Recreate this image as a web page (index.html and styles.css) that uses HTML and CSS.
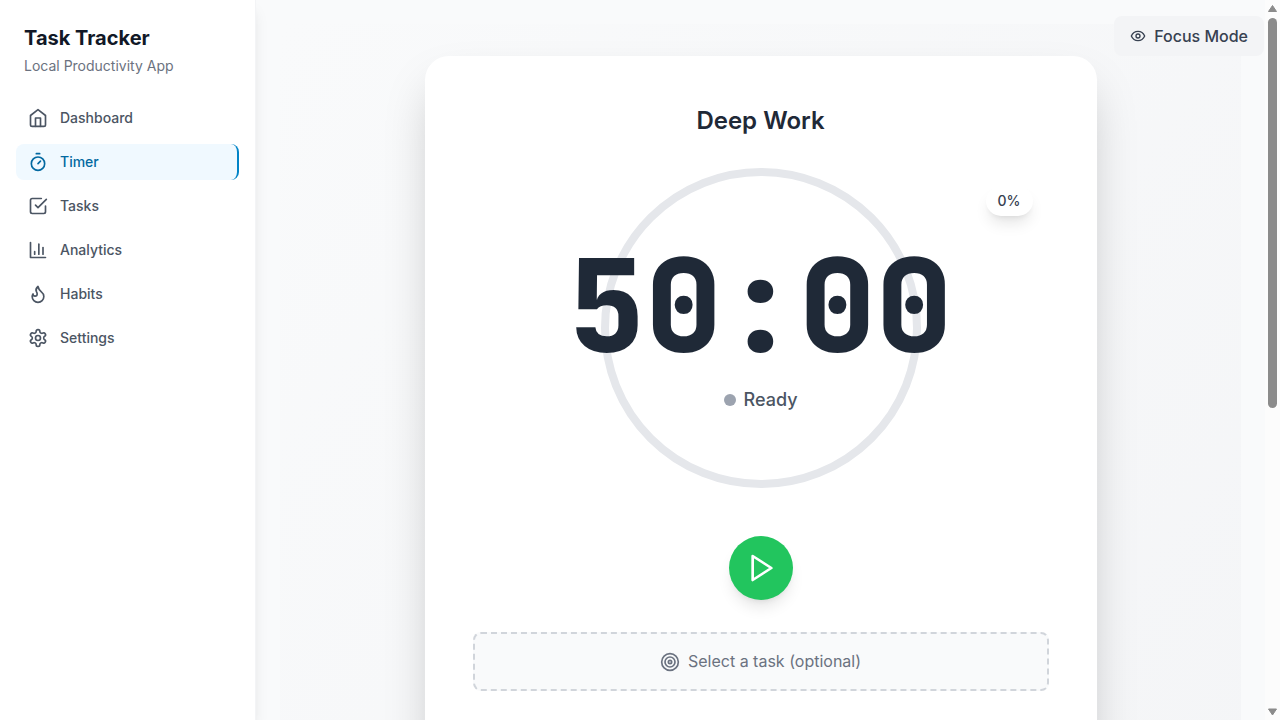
FILE: index.html
```html
<!DOCTYPE html>
<html lang="en">
<head>
<meta charset="utf-8">
<meta name="viewport" content="width=device-width, initial-scale=1">
<title>Task Tracker</title>
<link rel="stylesheet" href="styles.css">
</head>
<body>
<div class="app">
  <aside class="sidebar">
    <header class="brand">
      <h1 class="brand-title">Task Tracker</h1>
      <p class="brand-subtitle">Local Productivity App</p>
    </header>
    <nav class="nav">
      <a class="nav-link" href="#dashboard">
        <svg class="icon" viewBox="0 0 24 24"><path d="m3 9 9-7 9 7v11a2 2 0 0 1-2 2H5a2 2 0 0 1-2-2z"/><polyline points="9 22 9 12 15 12 15 22"/></svg>
        Dashboard
      </a>
      <a class="nav-link active" href="#timer" aria-current="page">
        <svg class="icon" viewBox="0 0 24 24"><line x1="10" x2="14" y1="2" y2="2"/><line x1="12" x2="15" y1="14" y2="11"/><circle cx="12" cy="14" r="8"/></svg>
        Timer
      </a>
      <a class="nav-link" href="#tasks">
        <svg class="icon" viewBox="0 0 24 24"><path d="m9 11 3 3L22 4"/><path d="M21 12v7a2 2 0 0 1-2 2H5a2 2 0 0 1-2-2V5a2 2 0 0 1 2-2h11"/></svg>
        Tasks
      </a>
      <a class="nav-link" href="#analytics">
        <svg class="icon" viewBox="0 0 24 24"><path d="M3 3v18h18"/><path d="M18 17V9"/><path d="M13 17V5"/><path d="M8 17v-3"/></svg>
        Analytics
      </a>
      <a class="nav-link" href="#habits">
        <svg class="icon" viewBox="0 0 24 24"><path d="M8.500 14.500A2.500 2.500 0 0 0 11 12c0-1.380-.5-2-1-3-1.072-2.143-.224-4.054 2-6 .5 2.500 2 4.900 4 6.500 2 1.600 3 3.500 3 5.500a7 7 0 1 1-14 0c0-1.153.433-2.294 1-3a2.500 2.500 0 0 0 2.500 2.500z"/></svg>
        Habits
      </a>
      <a class="nav-link" href="#settings">
        <svg class="icon" viewBox="0 0 24 24"><path d="M12.220 2h-.44a2 2 0 0 0-2 2v.18a2 2 0 0 1-1 1.730l-.43.25a2 2 0 0 1-2 0l-.15-.08a2 2 0 0 0-2.730.73l-.22.38a2 2 0 0 0 .73 2.730l.15.1a2 2 0 0 1 1 1.720v.51a2 2 0 0 1-1 1.740l-.15.09a2 2 0 0 0-.73 2.730l.22.38a2 2 0 0 0 2.730.73l.15-.08a2 2 0 0 1 2 0l.43.25a2 2 0 0 1 1 1.730V20a2 2 0 0 0 2 2h.44a2 2 0 0 0 2-2v-.18a2 2 0 0 1 1-1.730l.43-.25a2 2 0 0 1 2 0l.15.08a2 2 0 0 0 2.730-.73l.22-.39a2 2 0 0 0-.73-2.730l-.15-.08a2 2 0 0 1-1-1.740v-.5a2 2 0 0 1 1-1.740l.15-.09a2 2 0 0 0 .73-2.730l-.22-.38a2 2 0 0 0-2.730-.73l-.15.08a2 2 0 0 1-2 0l-.43-.25a2 2 0 0 1-1-1.730V4a2 2 0 0 0-2-2z"/><circle cx="12" cy="12" r="3"/></svg>
        Settings
      </a>
    </nav>
  </aside>

  <main class="main">
    <div class="stage">
      <section class="card">
        <h2 class="session">Deep Work</h2>
        <div class="dial-row">
          <div class="dial">
            <svg class="ring" viewBox="0 0 320 320"><circle cx="160" cy="160" r="156"/></svg>
            <div class="readout">
              <div class="time" role="timer">50:00</div>
              <div class="status"><span class="dot"></span>Ready</div>
            </div>
          </div>
          <span class="percent">0%</span>
        </div>
        <button class="play" type="button" aria-label="Start">
          <svg class="icon" viewBox="0 0 24 24"><polygon points="5 3 19 12 5 21 5 3"/></svg>
        </button>
        <button class="task-picker" type="button">
          <svg class="icon" viewBox="0 0 24 24"><circle cx="12" cy="12" r="10"/><circle cx="12" cy="12" r="6"/><circle cx="12" cy="12" r="2"/></svg>
          Select a task (optional)
        </button>
      </section>
    </div>
  </main>

  <div class="scrollbar" aria-hidden="true">
    <svg class="arrow" viewBox="0 0 15 18"><path d="M7.500 5.500 11.500 11.500H3.500z"/></svg>
    <div class="track"><div class="thumb"></div></div>
    <svg class="arrow" viewBox="0 0 15 18"><path d="M7.500 13 11.500 7H3.500z"/></svg>
  </div>
</div>

<button class="focus-mode" type="button">
  <svg class="icon" viewBox="0 0 24 24"><path d="M2 12s3-7 10-7 10 7 10 7-3 7-10 7-10-7-10-7Z"/><circle cx="12" cy="12" r="3"/></svg>
  Focus Mode
</button>
</body>
</html>
```

FILE: styles.css
```css
*, *::before, *::after {
  box-sizing: border-box;
}

body {
  margin: 0;
  background: #f9fafb;
  color: #1f2937;
  font-family: Inter, "Liberation Sans", sans-serif;
  font-size: 16px;
  line-height: 24px;
}

h1, h2, p {
  margin: 0;
}

button {
  border: 0;
  font: inherit;
  cursor: pointer;
}

.icon {
  flex: none;
  width: 20px;
  height: 20px;
  fill: none;
  stroke: currentColor;
  stroke-width: 2;
  stroke-linecap: round;
  stroke-linejoin: round;
}

.app {
  display: flex;
  height: 100vh;
  overflow: hidden;
}

/* Sidebar */
.sidebar {
  z-index: 1;
  flex: none;
  width: 256px;
  background: #fff;
  border-right: 1px solid #f3f4f6;
  box-shadow: 0 10px 15px -3px rgba(0, 0, 0, 0.1), 0 4px 6px -4px rgba(0, 0, 0, 0.1);
}

.brand {
  padding: 24px;
}

.brand-title {
  color: #111827;
  font-size: 20px;
  font-weight: 700;
  line-height: 28px;
}

.brand-subtitle {
  margin-top: 4px;
  color: #6b7280;
  font-size: 14px;
  line-height: 20px;
}

.nav {
  display: flex;
  flex-direction: column;
  gap: 8px;
  padding: 0 16px;
}

.nav-link {
  display: flex;
  align-items: center;
  gap: 12px;
  padding: 8px 12px;
  border-radius: 8px;
  color: #4b5563;
  font-size: 14px;
  font-weight: 500;
  line-height: 20px;
  text-decoration: none;
}

.nav-link.active {
  background: #f0f9ff;
  border-right: 2px solid #0284c7;
  color: #0369a1;
}

/* Timer page */
.main {
  flex: 1;
  min-width: 0;
  padding: 24px;
  overflow-y: auto;
  scrollbar-width: none;
}

.stage {
  min-height: 170vh;
  padding: 32px;
  background: linear-gradient(to bottom right, #f9fafb, #f3f4f6);
}

.card {
  display: flex;
  flex-direction: column;
  align-items: center;
  max-width: 672px;
  min-height: 150vh;
  margin: 0 auto;
  padding: 48px;
  background: #fff;
  border-radius: 24px;
  box-shadow: 0 25px 50px -12px rgba(0, 0, 0, 0.25);
}

.session {
  margin-bottom: 30px;
  font-size: 24px;
  font-weight: 600;
  line-height: 34px;
}

.dial-row {
  position: relative;
  display: flex;
  justify-content: center;
  width: 100%;
  margin-bottom: 48px;
}

.dial {
  display: grid;
  grid-template: 320px / 320px;
}

.ring,
.readout {
  grid-area: 1 / 1;
}

.ring {
  width: 100%;
  fill: none;
  stroke: #e5e7eb;
  stroke-width: 8;
}

.readout {
  z-index: 1;
  display: flex;
  flex-direction: column;
  align-items: center;
  justify-content: center;
  gap: 16px;
}

.time {
  font-family: "JetBrains Mono", "DejaVu Sans Mono", monospace;
  font-size: 128px;
  font-weight: 900;
  line-height: 128px;
}

.status {
  display: flex;
  align-items: center;
  gap: 8px;
  color: #4b5563;
  font-size: 18px;
  font-weight: 500;
  line-height: 28px;
}

.dot {
  width: 12px;
  height: 12px;
  border-radius: 50%;
  background: #9ca3af;
}

.percent {
  position: absolute;
  top: 18px;
  right: 16px;
  padding: 5px 12px;
  border-radius: 16px;
  background: #fff;
  box-shadow: 0 10px 15px -3px rgba(0, 0, 0, 0.1), 0 4px 6px -4px rgba(0, 0, 0, 0.1);
  color: #374151;
  font-size: 14px;
  font-weight: 500;
  line-height: 20px;
}

.play {
  display: grid;
  place-items: center;
  width: 64px;
  height: 64px;
  margin-bottom: 32px;
  padding: 0 0 0 3px;
  border-radius: 50%;
  background: #22c55e;
  box-shadow: 0 10px 15px -3px rgba(0, 0, 0, 0.1), 0 4px 6px -4px rgba(0, 0, 0, 0.1);
  color: #fff;
}

.play .icon {
  width: 32px;
  height: 32px;
}

.task-picker {
  display: flex;
  align-items: center;
  justify-content: center;
  gap: 8px;
  width: 100%;
  padding: 16px;
  border: 2px dashed #d1d5db;
  border-radius: 8px;
  background: #f9fafb;
  color: #6b7280;
  line-height: 23px;
}

.focus-mode {
  position: fixed;
  z-index: 2;
  top: 16px;
  right: 16px;
  display: flex;
  align-items: center;
  gap: 8px;
  padding: 8px 16px;
  border-radius: 8px;
  background: #f3f4f6;
  color: #374151;
  font-weight: 500;
}

.focus-mode .icon {
  width: 16px;
  height: 16px;
}

/* Scrollbar */
.scrollbar {
  display: flex;
  flex: none;
  flex-direction: column;
  width: 15px;
  background: #fcfcfc;
}

.arrow {
  flex: none;
  width: 15px;
  height: 18px;
  fill: #8b8b8b;
  stroke: #8b8b8b;
  stroke-linejoin: round;
}

.track {
  flex: 1;
  padding: 0 3px;
}

.thumb {
  height: 57%;
  border-radius: 5px;
  background: #8b8b8b;
}
```
